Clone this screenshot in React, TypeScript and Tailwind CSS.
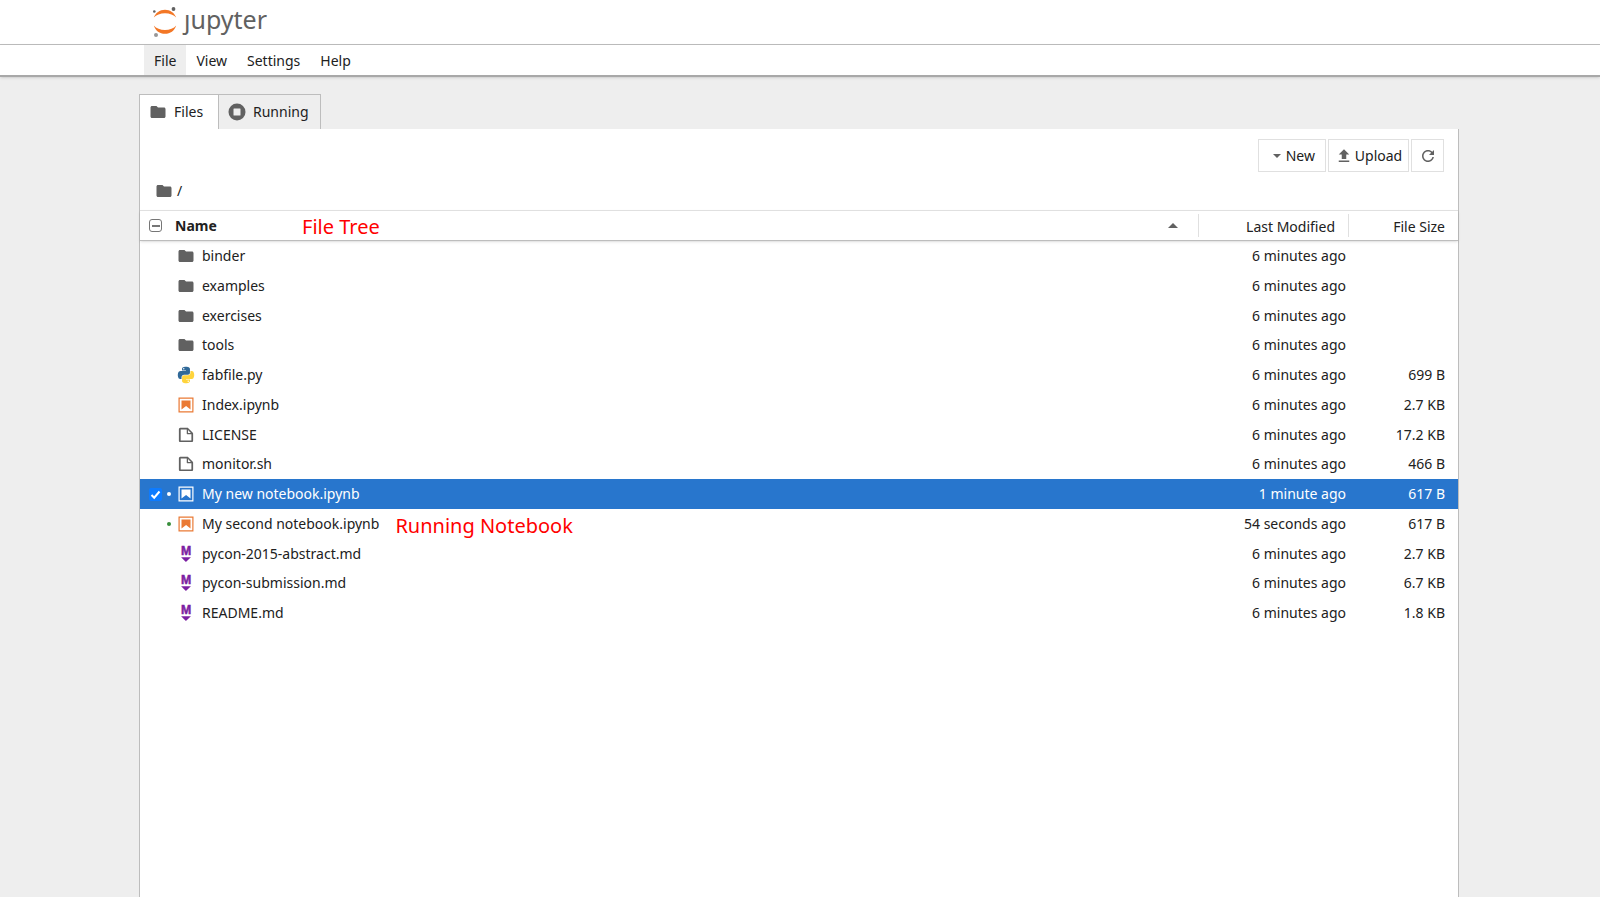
import React, { useState } from 'react';
import { clsx } from 'clsx';

type FileKind = 'folder' | 'python' | 'notebook' | 'file' | 'markdown';

interface Entry {
  name: string;
  kind: FileKind;
  modified: string;
  size?: string;
  running?: boolean;
  note?: string;
}

const entries: Entry[] = [
  { name: 'binder', kind: 'folder', modified: '6 minutes ago' },
  { name: 'examples', kind: 'folder', modified: '6 minutes ago' },
  { name: 'exercises', kind: 'folder', modified: '6 minutes ago' },
  { name: 'tools', kind: 'folder', modified: '6 minutes ago' },
  { name: 'fabfile.py', kind: 'python', modified: '6 minutes ago', size: '699 B' },
  { name: 'Index.ipynb', kind: 'notebook', modified: '6 minutes ago', size: '2.7 KB' },
  { name: 'LICENSE', kind: 'file', modified: '6 minutes ago', size: '17.2 KB' },
  { name: 'monitor.sh', kind: 'file', modified: '6 minutes ago', size: '466 B' },
  { name: 'My new notebook.ipynb', kind: 'notebook', modified: '1 minute ago', size: '617 B', running: true },
  {
    name: 'My second notebook.ipynb',
    kind: 'notebook',
    modified: '54 seconds ago',
    size: '617 B',
    running: true,
    note: 'Running Notebook',
  },
  { name: 'pycon-2015-abstract.md', kind: 'markdown', modified: '6 minutes ago', size: '2.7 KB' },
  { name: 'pycon-submission.md', kind: 'markdown', modified: '6 minutes ago', size: '6.7 KB' },
  { name: 'README.md', kind: 'markdown', modified: '6 minutes ago', size: '1.8 KB' },
];

const menus = ['File', 'View', 'Settings', 'Help'];

const FolderIcon = () => (
  <svg viewBox="0 0 24 24" className="size-[18px] shrink-0 fill-[#616161]" aria-hidden="true">
    <path d="M10 4H4c-1.1 0-1.99.9-1.99 2L2 18c0 1.1.9 2 2 2h16c1.1 0 2-.9 2-2V8c0-1.1-.9-2-2-2h-8l-2-2z" />
  </svg>
);

const FileIcon = () => (
  <svg viewBox="0 0 22 22" className="size-[18px] shrink-0 fill-[#616161]" aria-hidden="true">
    <path d="M19.3 8.2l-5.5-5.5c-.3-.3-.7-.5-1.2-.5H3.9c-.8.1-1.6.9-1.6 1.8v14.1c0 .9.7 1.6 1.6 1.6h14.2c.9 0 1.6-.7 1.6-1.6V9.4c.1-.5-.1-.9-.4-1.2zm-5.8-3.3l3.4 3.6h-3.4V4.9zm3.9 12.7H4.7c-.1 0-.2 0-.2-.2V4.7c0-.2.1-.3.2-.3h7.2v4.4s0 .8.3 1.1c.3.3 1.1.3 1.1.3h4.3v7.2s-.1.2-.2.2z" />
  </svg>
);

const NotebookIcon = ({ selected }: { selected: boolean }) => (
  <svg
    viewBox="0 0 22 22"
    className={clsx('size-[18px] shrink-0', selected ? 'fill-white' : 'fill-[#ea7a35]')}
    aria-hidden="true"
  >
    <path d="M18.7 3.3v15.4H3.3V3.3h15.4m1.5-1.5H1.8v18.3h18.3l.1-18.3z" />
    <path d="M16.5 16.5l-5.4-4.3-5.6 4.3v-11h11z" />
  </svg>
);

const MarkdownIcon = () => (
  <svg viewBox="0 0 22 22" className="size-[18px] shrink-0 overflow-visible fill-[#7b1fa2]" aria-hidden="true">
    <text
      x="11"
      y="12.5"
      textAnchor="middle"
      fontSize="15"
      fontWeight="700"
      fontFamily="Liberation Sans, Arial, sans-serif"
      stroke="#7b1fa2"
      strokeWidth="0.6"
    >
      M
    </text>
    <path d="M5 14.9h12l-6.1 6z" />
  </svg>
);

const PythonIcon = () => (
  <svg viewBox="-5 -5 121 122" className="size-[18px] shrink-0" aria-hidden="true">
    <path
      fill="#306998"
      d="M54.9 0C50.3 0 46 .4 42.1 1.1 30.8 3.1 28.7 7.3 28.7 15v10.2h26.8v3.5H18.6c-7.8 0-14.6 4.6-16.7 13.5-2.5 10.3-2.6 16.6 0 27.3 1.9 7.9 6.4 13.6 14.2 13.6h9.2V70.8c0-8.8 7.7-16.6 16.8-16.6h26.8c7.4 0 13.4-6.2 13.4-13.7V15c0-7.3-6.1-12.7-13.4-13.9C64.3.3 59.5 0 54.9 0zM40.4 8.2c2.8 0 5 2.3 5 5.1s-2.2 5.1-5 5.1-5-2.3-5-5.1 2.2-5.1 5-5.1z"
    />
    <path
      fill="#ffd43b"
      d="M85.6 28.7v11.9c0 9.2-7.8 17-16.7 17H42.1c-7.3 0-13.4 6.2-13.4 13.6v25.5c0 7.3 6.3 11.5 13.4 13.6 8.5 2.5 16.6 3 26.8 0 6.7-1.9 13.4-5.9 13.4-13.6V86.5H55.5v-3.4h40.2c7.8 0 10.7-5.4 13.4-13.6 2.8-8.4 2.7-16.5 0-27.2-1.9-7.8-5.6-13.6-13.4-13.6zM70.6 93.3c2.8 0 5 2.3 5 5.1s-2.2 5.1-5 5.1-5-2.3-5-5.1 2.2-5.1 5-5.1z"
    />
  </svg>
);

const EntryIcon = ({ kind, selected }: { kind: FileKind; selected: boolean }) => {
  switch (kind) {
    case 'folder':
      return <FolderIcon />;
    case 'python':
      return <PythonIcon />;
    case 'notebook':
      return <NotebookIcon selected={selected} />;
    case 'markdown':
      return <MarkdownIcon />;
    default:
      return <FileIcon />;
  }
};

const JupyterLogo = () => (
  <a href="#" className="flex items-start text-[#616161]" aria-label="jupyter">
    <svg viewBox="0 0 30 32" className="mt-0.5 h-8 w-[30px]" aria-hidden="true">
      <path fill="#f37726" d="M3.8 12.6C5.4 8 9.8 4.8 15 4.8s9.6 3.2 11.2 7.8C23.8 10 19.7 8.3 15 8.3S6.2 10 3.8 12.6z" />
      <path fill="#f37726" d="M3.8 20.4C5.4 25.6 9.8 28.8 15 28.8s9.6-3.2 11.2-8.4C23.8 23.2 19.7 24.9 15 24.9S6.2 23.2 3.8 20.4z" />
      <circle cx="23.5" cy="4" r="1.9" fill="#616161" />
      <circle cx="4.3" cy="6.5" r="1.3" fill="#616161" />
      <circle cx="6" cy="30" r="2" fill="#989798" />
    </svg>
    <span className="pl-1 text-[25px] leading-8">ȷupyter</span>
  </a>
);

const Toolbar = () => (
  <div className="flex justify-end gap-0.5 pt-2.5 pr-3.5 text-[#212121]">
    <button type="button" className="flex h-[33px] w-[68px] items-center justify-end gap-[5px] border border-[#e0e0e0] pr-2.5">
      <svg viewBox="0 0 8 4" className="h-1 w-2 fill-[#616161]" aria-hidden="true">
        <path d="M0 0h8L4 4z" />
      </svg>
      New
    </button>
    <button type="button" className="flex h-[33px] w-[81px] items-center justify-center gap-0.5 border border-[#e0e0e0]">
      <svg viewBox="0 0 24 24" className="size-[18px] fill-[#616161]" aria-hidden="true">
        <path d="M9 16h6v-6h4l-7-7-7 7h4zm-4 2h14v2H5z" />
      </svg>
      Upload
    </button>
    <button
      type="button"
      aria-label="Refresh"
      className="flex h-[33px] w-[33px] items-center justify-center border border-[#e0e0e0]"
    >
      <svg viewBox="0 0 18 18" className="size-[18px] fill-[#616161]" aria-hidden="true">
        <path d="M9 13.5c-2.49 0-4.5-2.01-4.5-4.5S6.51 4.5 9 4.5c1.24 0 2.36.52 3.17 1.33L10 8h5V3l-1.76 1.76C12.15 3.68 10.66 3 9 3 5.69 3 3.01 5.69 3.01 9S5.69 15 9 15c2.97 0 5.43-2.16 5.9-5h-1.52c-.46 2-2.24 3.5-4.38 3.5z" />
      </svg>
    </button>
  </div>
);

const App = () => {
  const [selected, setSelected] = useState('My new notebook.ipynb');

  return (
    <div className="flex min-h-screen flex-col bg-[#eeeeee] font-['Noto_Sans',sans-serif] text-[14px] leading-5 text-[#212121]">
      <header className="bg-white">
        <div className="h-[45px] border-b border-[#bdbdbd] pr-0.5">
          <div className="mx-auto flex max-w-[1320px] px-[11px] pt-[3px]">
            <JupyterLogo />
          </div>
        </div>
        <div className="border-b-2 border-[#a8a8a8] pr-0.5 shadow-sm">
          <nav className="mx-auto flex max-w-[1320px] px-[5px]">
            {menus.map((menu) => (
              <button
                key={menu}
                type="button"
                className={clsx('h-[30px] px-2.5 pt-0.5', menu === 'File' && 'bg-[#eeeeee]')}
              >
                {menu}
              </button>
            ))}
          </nav>
        </div>
      </header>

      <div className="flex grow flex-col pt-[17px] pr-0.5">
        <main className="mx-auto flex w-full max-w-[1320px] grow flex-col">
          <div role="tablist" className="flex">
            <button
              type="button"
              role="tab"
              aria-selected="true"
              className="flex h-[35px] w-[79px] items-center gap-[7px] border-t border-l border-[#bdbdbd] bg-white pl-[9px]"
            >
              <FolderIcon />
              Files
            </button>
            <button
              type="button"
              role="tab"
              aria-selected="false"
              className="flex h-[35px] w-[103px] items-center gap-[7px] border-x border-t border-[#bdbdbd] pl-[9px]"
            >
              <svg viewBox="0 0 18 18" className="size-[18px]" aria-hidden="true">
                <circle cx="9" cy="9" r="8.5" fill="#616161" />
                <rect x="5.5" y="5.5" width="7" height="7" rx="0.5" fill="#eeeeee" />
              </svg>
              Running
            </button>
          </div>

          <div className="grow border-x border-[#bdbdbd] bg-white">
            <Toolbar />
            <nav aria-label="Breadcrumb" className="flex h-[38px] items-center gap-1 pl-[15px]">
              <FolderIcon />
              <a href="#">/</a>
            </nav>

            <table className="h-[418px] w-full table-fixed border-collapse">
              <colgroup>
                <col />
                <col className="w-[150px]" />
                <col className="w-[110px]" />
              </colgroup>
              <thead className="border-t border-b border-t-[#e0e0e0] border-b-[#bdbdbd] shadow-sm">
                <tr className="h-[30px]">
                  <th className="p-0 text-left">
                    <div className="relative flex items-center pl-[9px]">
                      <input
                        type="checkbox"
                        aria-label="Select all files"
                        className="flex size-[13px] appearance-none items-center justify-center rounded-[3px] border border-[#767676] before:h-0.5 before:w-2 before:bg-[#767676] before:content-['']"
                      />
                      <span className="pl-[13px] font-bold">Name</span>
                      <span className="absolute left-[162px] pt-0.5 text-[20px] font-normal text-[#ff0000]">File Tree</span>
                      <svg viewBox="0 0 10 5" className="mr-5 ml-auto h-[5px] w-2.5 fill-[#616161]" aria-hidden="true">
                        <path d="M0 5h10L5 0z" />
                      </svg>
                    </div>
                  </th>
                  <th className="p-0 text-right font-normal">
                    <div className="border-l border-[#e0e0e0] pt-[3px] pr-[13px]">Last Modified</div>
                  </th>
                  <th className="p-0 text-right font-normal">
                    <div className="border-l border-[#e0e0e0] pt-[3px] pr-[13px]">File Size</div>
                  </th>
                </tr>
              </thead>
              <tbody>
                {entries.map((entry) => {
                  const isSelected = entry.name === selected;
                  return (
                    <tr
                      key={entry.name}
                      onClick={() => setSelected(entry.name)}
                      className={clsx(isSelected && 'bg-[#2876cd] text-white')}
                    >
                      <td className="p-0">
                        <div className="flex items-center pl-[9px]">
                          <span className="relative size-[13px]">
                            {isSelected && (
                              <>
                                <input
                                  type="checkbox"
                                  checked
                                  readOnly
                                  aria-label={`Select ${entry.name}`}
                                  className="block size-[13px] appearance-none rounded-[2px] bg-[#0d7bff]"
                                />
                                <svg
                                  viewBox="0 0 13 13"
                                  className="pointer-events-none absolute inset-0 fill-none stroke-white stroke-2"
                                  aria-hidden="true"
                                >
                                  <path d="M2.5 7l2.7 2.7L10.5 3.5" />
                                </svg>
                              </>
                            )}
                          </span>
                          <span
                            className={clsx(
                              'mr-1.5 ml-[5px] size-1 rounded-full',
                              entry.running && (isSelected ? 'bg-white' : 'bg-[#388e3c]')
                            )}
                          />
                          <EntryIcon kind={entry.kind} selected={isSelected} />
                          <span className="pl-[7px]">{entry.name}</span>
                          {entry.note && (
                            <span className="pt-1 pl-4 text-[20px] leading-4 text-[#ff0000]">{entry.note}</span>
                          )}
                        </div>
                      </td>
                      <td className="p-0 pr-0.5 text-right">{entry.modified}</td>
                      <td className="p-0 pr-[13px] text-right">{entry.size}</td>
                    </tr>
                  );
                })}
              </tbody>
            </table>
          </div>
        </main>
      </div>
    </div>
  );
};

export default App;
